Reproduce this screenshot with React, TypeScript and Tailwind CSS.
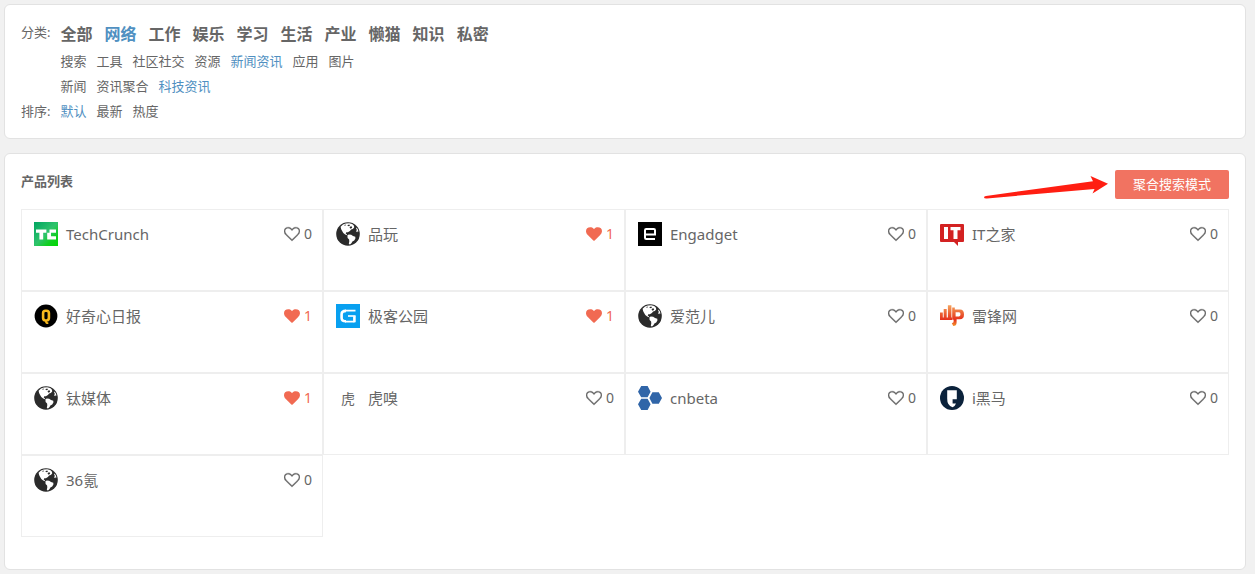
import type { ReactNode } from "react";

type Item = { name: string; icon: ReactNode; likes: number };

const iconClass = "block size-6 shrink-0";

function Globe() {
  return (
    <svg viewBox="0 0 24 24" className={iconClass} aria-hidden="true">
      <circle cx="12" cy="12" r="11.8" fill="#2b2b2b" />
      <path
        fill="#fff"
        d="M4.6 4.8 7 2.5 9.8 1.4l3.4-.2 3 .9 1.8 1.6.2 1.8-1.4 1.4-1.7.5-1.2 1.7-2 1.2-1.6 0-.6 1.2 1.1.8.3 1-1.9-.7-1.9-1.6-1.3-2.2-.9-1.9z"
      />
      <path fill="#2b2b2b" d="m11.2 3.2 2-.7.9 1-1.6.7zM13.8 4.8l1.7-.5.7 1.2-1.3 1.2-1.2-.6zM8.2 2.9l1.4-.5.3.8-1.2.5z" />
      <path
        fill="#fff"
        d="m11.4 13.2 1.4-.8 2.4.3 1.8 1.2 2.3.9.1 1.6-1.2 2-1.8 1.1-1 1.7-1.4 1.4-1.2-.6.5-2.7-.2-1.7-1.5-1.7z"
      />
      <path fill="#fff" d="m20.6 5.4 1.3 2.1.6 2.2-.8-.4-.6 1-.9-.8.6-1.8-.7-1.2z" />
    </svg>
  );
}

function TechCrunchIcon() {
  return (
    <svg viewBox="0 0 24 24" className={iconClass} aria-hidden="true">
      <defs>
        <linearGradient id="tc" x1="0" y1="0" x2="1" y2="1">
          <stop offset="0" stopColor="#00a562" />
          <stop offset=".5" stopColor="#2fc36c" />
          <stop offset=".75" stopColor="#10cf20" />
          <stop offset="1" stopColor="#00d800" />
        </linearGradient>
      </defs>
      <path fill="url(#tc)" d="M0 0h24v24H0z" />
      <path fill="#fff" d="M2 7.5h10.4v3.2H9.2v6.8H5.4v-6.8H2zM15.5 7.5H22v3.2h-5v3.6h5v3.2h-8.8v-6.8h2.3z" />
    </svg>
  );
}

function CuriosityIcon() {
  return (
    <svg viewBox="0 0 24 24" className={iconClass} aria-hidden="true">
      <circle cx="12" cy="12" r="11.4" fill="#000" />
      <rect x="9.1" y="6.7" width="5.8" height="9.8" rx="2.4" fill="none" stroke="#f9b91d" strokeWidth="2.6" />
      <path d="M12 16v1.9q0 1.4 2.3 1.2" fill="none" stroke="#f9b91d" strokeWidth="1.8" />
    </svg>
  );
}

function GeekParkIcon() {
  return (
    <svg viewBox="0 0 24 24" className={iconClass} aria-hidden="true">
      <path fill="#08a0f0" d="M0 0h24v24H0z" />
      <path fill="none" stroke="#fff" strokeWidth="1.6" d="M19.5 6.6H9M18.6 17.6H9" />
      <path fill="none" stroke="#fff" strokeWidth="2.6" d="M10 6.9Q5.6 6.9 5.6 10.2v3.8q0 3.3 4.4 3.3M18.4 18.2v-6" />
      <path fill="none" stroke="#fff" strokeWidth="1.6" d="M19.6 12H12" />
    </svg>
  );
}

function EngadgetIcon() {
  return (
    <svg viewBox="0 0 24 24" className={iconClass} aria-hidden="true">
      <path d="M0 0h24v24H0z" />
      <path
        fill="none"
        stroke="#fff"
        strokeWidth="2"
        d="M17 17H8.2q-1.2 0-1.2-1.2V8.2Q7 7 8.2 7h7.6Q17 7 17 8.2v4.3H8"
      />
    </svg>
  );
}

function ITHomeIcon() {
  return (
    <svg viewBox="0 0 24 24" className={iconClass} aria-hidden="true">
      <path fill="#d32222" d="M1 2h22q1 0 1 1v16q0 1-1 1h-5v4l-4-4H1q-1 0-1-1V3q0-1 1-1z" />
      <path fill="#fff" d="M4 5h4v12H4zM10.5 5h10v3.3h-3V17h-4V8.3h-3z" />
    </svg>
  );
}

function LeiphoneIcon() {
  return (
    <svg viewBox="0 0 24 24" className={iconClass} aria-hidden="true">
      <defs>
        <linearGradient id="lp" x1="0" y1="0" x2="0" y2="1">
          <stop offset="0" stopColor="#f6a35c" />
          <stop offset=".5" stopColor="#e8502a" />
          <stop offset=".7" stopColor="#e62f1c" />
          <stop offset="1" stopColor="#f39a2e" />
        </linearGradient>
      </defs>
      <path
        fill="url(#lp)"
        d="M0 8.5h2.8V15H0zM3.7 5h3v10h-3zM7.9 1.2h3.5V15H7.9zM0 13.5h12v2.4H0zM12.2 3.6h2.6v2H20q4 0 4 4.8t-4 4.8h-3.4v3.4q0 3.5-3.4 3.5l-1.4-3q1.8 0 1.8-1.6v-1.8h-1.4zM15.6 8.2v4.2H19q1.5 0 1.5-2.1T19 8.2z"
      />
    </svg>
  );
}

function HuxiuIcon() {
  return (
    <span
      aria-hidden="true"
      className="flex size-6 shrink-0 items-center justify-center font-['Noto_Sans_CJK_SC',sans-serif] text-sm leading-6 text-[#666]"
    >
      虎
    </span>
  );
}

function CnbetaIcon() {
  return (
    <svg viewBox="0 0 24 24" className={iconClass} aria-hidden="true">
      <path
        fill="#3065a8"
        d="M3.2 0h6.4l3 5.7-3 5.5H3.2L0 5.7zM3.2 12.8h6.4l3 5.5-3 5.7H3.2L0 18.3zM14.4 6.2h6.4l3.2 5.8-3.2 5.8h-6.4L11.4 12z"
      />
    </svg>
  );
}

function IHeimaIcon() {
  return (
    <svg viewBox="0 0 24 24" className={iconClass} aria-hidden="true">
      <circle cx="12" cy="12" r="12" fill="#0b223b" />
      <path fill="#fff" d="M7.2 4.2h9.6v9h-4.2v4.4h3.4q-.8 2.6-3.4 3.6-3.2-1.1-4.4-3.5-1-2-1-5z" />
    </svg>
  );
}

const HEART_OUTLINE =
  "M1664 596q0-81-21.5-143t-55-98.5-81.5-59.5-94-31-98-8-112 25.5-110.5 64-86.5 72-60 61.5q-18 22-49 22t-49-22q-24-28-60-61.5t-86.5-72-110.5-64-112-25.5-98 8-94 31-81.5 59.5-55 98.5-21.5 143q0 168 187 355l581 560 580-559q188-188 188-356zm128 0q0 221-229 450l-623 600q-18 18-44 18t-44-18l-624-602q-10-8-27.5-26t-55.5-65.5-68-97.5-53.5-121-23.5-138q0-220 127-344t351-124q62 0 126.5 21.5t120 58 95.5 68.5 76 68q36-36 76-68t95.5-68.5 120-58 126.5-21.5q224 0 351 124t127 344z";
const HEART_SOLID =
  "M896 1664q-26 0-44-18l-624-602q-10-8-27.5-26t-55.5-65.5-68-97.5-53.5-121-23.5-138q0-220 127-344t351-124q62 0 126.5 21.5t120 58 95.5 68.5 76 68q36-36 76-68t95.5-68.5 120-58 126.5-21.5q224 0 351 124t127 344q0 221-229 450l-623 600q-18 18-44 18z";

const items: Item[] = [
  { name: "TechCrunch", icon: <TechCrunchIcon />, likes: 0 },
  { name: "品玩", icon: <Globe />, likes: 1 },
  { name: "Engadget", icon: <EngadgetIcon />, likes: 0 },
  { name: "IT之家", icon: <ITHomeIcon />, likes: 0 },
  { name: "好奇心日报", icon: <CuriosityIcon />, likes: 1 },
  { name: "极客公园", icon: <GeekParkIcon />, likes: 1 },
  { name: "爱范儿", icon: <Globe />, likes: 0 },
  { name: "雷锋网", icon: <LeiphoneIcon />, likes: 0 },
  { name: "钛媒体", icon: <Globe />, likes: 1 },
  { name: "虎嗅", icon: <HuxiuIcon />, likes: 0 },
  { name: "cnbeta", icon: <CnbetaIcon />, likes: 0 },
  { name: "i黑马", icon: <IHeimaIcon />, likes: 0 },
  { name: "36氪", icon: <Globe />, likes: 0 },
];

function Links({ labels, active, large }: { labels: string[]; active?: string; large?: boolean }) {
  return (
    <div
      className={
        large
          ? "mb-px flex flex-wrap gap-x-3 text-base leading-7 font-bold"
          : "flex flex-wrap gap-x-2.5 leading-[25px]"
      }
    >
      {labels.map((label) => (
        <a key={label} href="#" className={label === active ? "text-[#5090c1]" : "hover:text-[#5090c1]"}>
          {label}
        </a>
      ))}
    </div>
  );
}

function ProductCell({ item }: { item: Item }) {
  const liked = item.likes > 0;
  return (
    <li className="flex h-[82px] items-start border border-[#eee] pt-3 pr-2.5 pl-3">
      <a href="#" className="flex items-center gap-2 text-[15px] leading-6">
        {item.icon}
        {item.name}
      </a>
      <button
        type="button"
        aria-label={`喜欢 ${item.name} ${item.likes}`}
        className={
          liked
            ? "ml-auto flex cursor-pointer items-center gap-1 text-sm leading-6 text-[#f16a52]"
            : "ml-auto flex cursor-pointer items-center gap-1 text-sm leading-6"
        }
      >
        <svg
          viewBox="0 0 1792 1792"
          className="size-4"
          fill="currentColor"
          stroke="currentColor"
          strokeWidth={liked ? 0 : 36}
          aria-hidden="true"
        >
          <path d={liked ? HEART_SOLID : HEART_OUTLINE} />
        </svg>
        {item.likes}
      </button>
    </li>
  );
}

const panel = "rounded-md border border-[#e2e2e2] bg-white px-4";

export default function App() {
  return (
    <main className="flex min-h-screen flex-col gap-3.5 bg-[#f1f1f1] pt-1 pr-[9px] pb-1 pl-1 font-['Noto_Sans','Noto_Sans_CJK_SC',sans-serif] text-[13px] text-[#666]">
      <nav className={`${panel} pt-[15px] pb-3.5`}>
        <div className="flex gap-2.5">
          <span className="leading-6">分类:</span>
          <div>
            <Links large labels={["全部", "网络", "工作", "娱乐", "学习", "生活", "产业", "懒猫", "知识", "私密"]} active="网络" />
            <Links labels={["搜索", "工具", "社区社交", "资源", "新闻资讯", "应用", "图片"]} active="新闻资讯" />
            <Links labels={["新闻", "资讯聚合", "科技资讯"]} active="科技资讯" />
          </div>
        </div>
        <div className="flex gap-2.5">
          <span className="leading-[25px]">排序:</span>
          <Links labels={["默认", "最新", "热度"]} active="默认" />
        </div>
      </nav>

      <section className={`${panel} pt-4 pb-8`}>
        <header className="mb-2.5 flex items-start">
          <h2 className="leading-[22px] font-bold">产品列表</h2>
          <svg viewBox="0 0 128 29" className="mr-1 ml-auto h-[29px] w-32" aria-hidden="true">
            <path
              fill="#ff1e12"
              d="M1 27.2Q1 26.2 3 26L110 11.2 107.5 6 125 13.7 109.5 23.5 111.5 19 4 28.4Q1 28.6 1 27.2z"
            />
          </svg>
          <button type="button" className="h-[29px] cursor-pointer rounded-xs bg-[#f17361] px-[18px] text-white">
            聚合搜索模式
          </button>
        </header>
        <ul className="grid grid-cols-4">
          {items.map((item) => (
            <ProductCell key={item.name} item={item} />
          ))}
        </ul>
      </section>
    </main>
  );
}
